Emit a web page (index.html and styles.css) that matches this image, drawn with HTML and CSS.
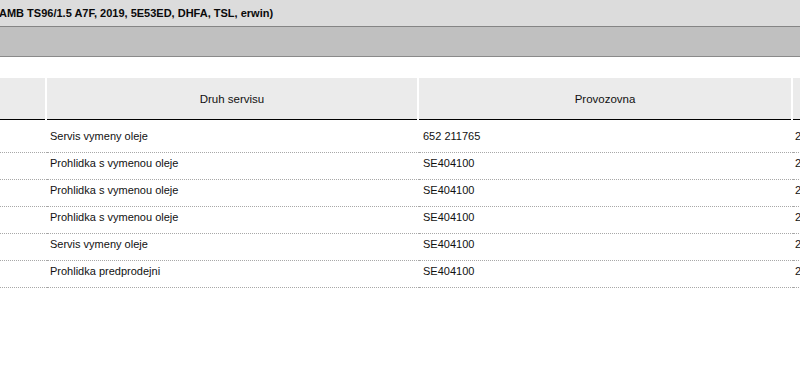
FILE: index.html
```html
<!DOCTYPE html>
<html lang="cs">
<head>
<meta charset="utf-8">
<title>Servisní historie</title>
<link rel="stylesheet" href="styles.css">
</head>
<body>
<div class="titlebar"><span class="title">AMB TS96/1.5 A7F, 2019, 5E53ED, DHFA, TSL, erwin)</span></div>
<div class="toolbar"></div>
<div class="content">
  <table class="grid">
    <colgroup>
      <col class="c1"><col class="c2"><col class="c3"><col class="c4">
    </colgroup>
    <thead>
      <tr>
        <th></th>
        <th>Druh servisu</th>
        <th>Provozovna</th>
        <th></th>
      </tr>
    </thead>
    <tbody>
      <tr class="first"><td></td><td>Servis vymeny oleje</td><td>652 211765</td><td>2</td></tr>
      <tr><td></td><td>Prohlidka s vymenou oleje</td><td>SE404100</td><td>2</td></tr>
      <tr><td></td><td>Prohlidka s vymenou oleje</td><td>SE404100</td><td>2</td></tr>
      <tr><td></td><td>Prohlidka s vymenou oleje</td><td>SE404100</td><td>2</td></tr>
      <tr><td></td><td>Servis vymeny oleje</td><td>SE404100</td><td>2</td></tr>
      <tr><td></td><td>Prohlidka predprodejni</td><td>SE404100</td><td>2</td></tr>
    </tbody>
  </table>
</div>
</body>
</html>
```
FILE: styles.css
```css
html, body {
  margin: 0;
  padding: 0;
  background: #ffffff;
  overflow: hidden;
}
body {
  font-family: "Liberation Sans", Arial, sans-serif;
  color: #111111;
  width: 800px;
}
.titlebar {
  height: 26px;
  background: #dcdcdc;
  border-bottom: 1px solid #858585;
  display: flex;
  align-items: center;
  white-space: nowrap;
  overflow: hidden;
}
.title {
  font-weight: bold;
  font-size: 11px;
  text-indent: -1px;
  display: block;
  color: #0a0a0a;
}
.toolbar {
  height: 29px;
  background: #c0c0c0;
  border-bottom: 1px solid #8a8a8a;
}
.content {
  padding-top: 21px;
  overflow: hidden;
}
.grid {
  border-collapse: separate;
  border-spacing: 0;
  table-layout: fixed;
  width: 1167px;
  font-size: 11px;
}
.c1 { width: 47px; }
.c2 { width: 372px; }
.c3 { width: 374px; }
.c4 { width: 374px; }
.grid th {
  height: 42px;
  padding: 0 0 1px;
  box-sizing: border-box;
  background: #ebebeb;
  border-right: 2px solid #ffffff;
  box-shadow: inset 0 -1px 0 #000000;
  font-weight: normal;
  font-size: 11.5px;
  color: #111;
  text-align: center;
  vertical-align: middle;
}
.grid td {
  padding: 4px 3px 9px;
  line-height: 13px;
  border-bottom: 1px dotted #a8a8a8;
  vertical-align: top;
  white-space: nowrap;
  overflow: hidden;
}
.grid td:nth-child(3) { padding-left: 4px; }
.grid td:nth-child(4) { padding-left: 2px; }
.grid tr.first td { padding-top: 10px; }
```
